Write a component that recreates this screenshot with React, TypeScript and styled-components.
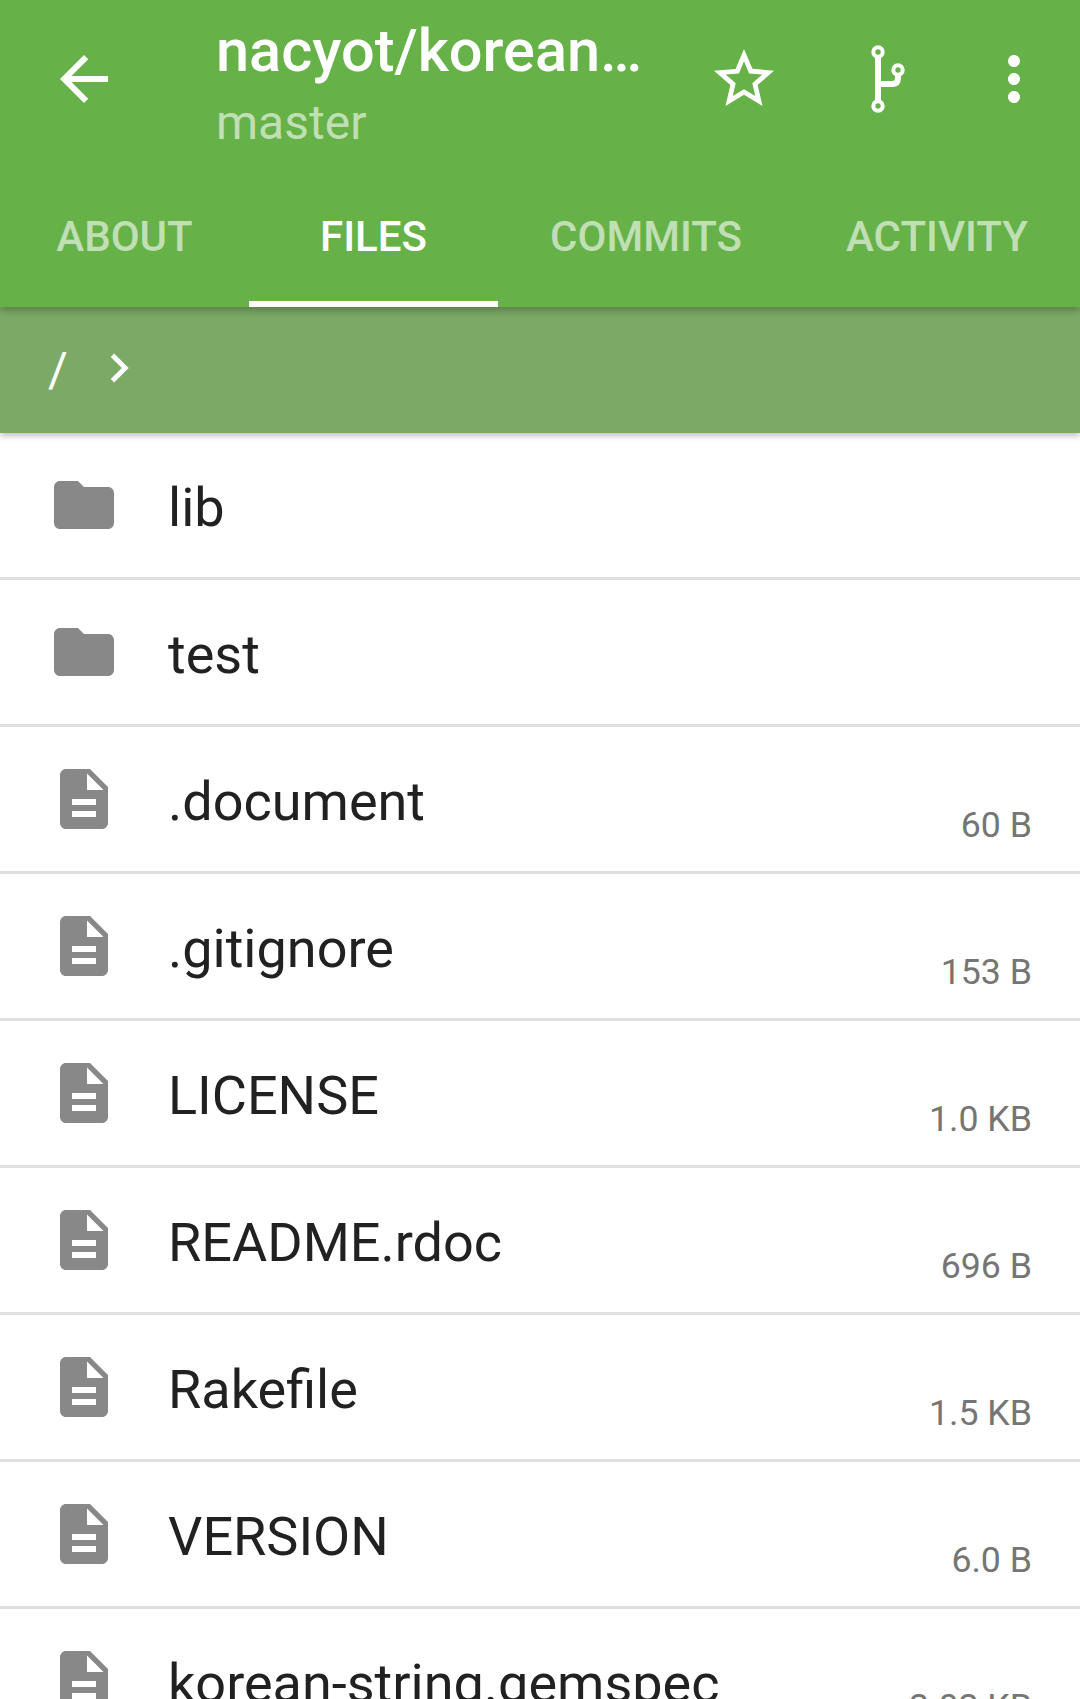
import styled, { createGlobalStyle } from "styled-components";

const GlobalStyle = createGlobalStyle`
    html, body {
        margin: 0;
        padding: 0;
        background: #fff;
    }
    body {
        font-family: Roboto, "Noto Sans", sans-serif;
    }
`

const Screen = styled.div`
    width: 1080px;
    height: 1699px;
    overflow: hidden;
    background: #fff;
`

const AppBar = styled.header`
    position: relative;
    z-index: 2;
    height: 307px;
    background: #66b248;
    box-shadow: 0 3px 9px rgba(0, 0, 0, 0.3);
`

const Toolbar = styled.div`
    display: flex;
    align-items: flex-start;
    height: 190px;
    padding-left: 48px;
`

const ActionIcon = styled.svg<{ $left?: number }>`
    flex: none;
    width: 72px;
    height: 72px;
    margin-top: 43px;
    margin-left: ${({ $left }) => $left ?? 0}px;
    fill: #fff;
`

const TitleBlock = styled.div`
    width: 492px;
    margin-left: 96px;
    padding-top: 16px;
`

const Title = styled.div`
    font-size: 59.5px;
    line-height: 70px;
    font-weight: 500;
    color: #fff;
    white-space: nowrap;
`

const Branch = styled.div`
    font-size: 48px;
    line-height: 56px;
    margin-top: 9px;
    color: rgba(255, 255, 255, 0.6);
`

const Tabs = styled.nav`
    display: grid;
    grid-template-columns: 249px 249px 296px 286px;
    height: 117px;
`

const Tab = styled.div<{ $active?: boolean }>`
    display: flex;
    align-items: flex-start;
    justify-content: center;
    padding-top: 22px;
    font-size: 42px;
    line-height: 50px;
    font-weight: 500;
    color: ${({ $active }) => ($active ? "#fff" : "rgba(255, 255, 255, 0.6)")};
    border-bottom: 6px solid ${({ $active }) => ($active ? "#fff" : "transparent")};
`

const PathBar = styled.div`
    position: relative;
    z-index: 1;
    display: flex;
    align-items: center;
    height: 126px;
    padding-left: 48px;
    background: #7caa66;
    box-shadow: 0 3px 6px rgba(0, 0, 0, 0.25);
`

const PathText = styled.span`
    font-size: 48px;
    line-height: 56px;
    color: #fff;
`

const PathChevron = styled.svg`
    width: 58px;
    height: 58px;
    margin-left: 22px;
    margin-top: -4px;
    fill: #fff;
`

const FileRow = styled.div`
    display: flex;
    align-items: flex-start;
    box-sizing: border-box;
    height: 147px;
    padding: 36px 48px 0 48px;
    border-bottom: 3px solid #e0e0e0;
`

const FileIcon = styled.svg`
    flex: none;
    width: 72px;
    height: 72px;
    fill: #888;
`

const FileName = styled.div`
    flex: 1;
    margin-left: 48px;
    padding-top: 3px;
    font-size: 54px;
    line-height: 72px;
    color: #212121;
    white-space: nowrap;
`

const FileSize = styled.div`
    margin-top: 38px;
    font-size: 35.7px;
    line-height: 48px;
    color: #757575;
    white-space: nowrap;
`

const FOLDER = "M10 4H4c-1.1 0-1.99.9-1.99 2L2 18c0 1.1.9 2 2 2h16c1.1 0 2-.9 2-2V8c0-1.1-.9-2-2-2h-8l-2-2z";
const DOCUMENT = "M14 2H6c-1.1 0-1.99.9-1.99 2L4 20c0 1.1.89 2 1.99 2H18c1.1 0 2-.9 2-2V8l-6-6zm2 16H8v-2h8v2zm0-4H8v-2h8v2zm-3-5V3.5L18.5 9H13z";

const files = [
    { name: "lib", folder: true },
    { name: "test", folder: true },
    { name: ".document", size: "60 B" },
    { name: ".gitignore", size: "153 B" },
    { name: "LICENSE", size: "1.0 KB" },
    { name: "README.rdoc", size: "696 B" },
    { name: "Rakefile", size: "1.5 KB" },
    { name: "VERSION", size: "6.0 B" },
    { name: "korean-string.gemspec", size: "2.02 KB" },
];

const App = () => {
    return <>
        <GlobalStyle />
        <Screen>
            <AppBar>
                <Toolbar>
                    <ActionIcon viewBox="0 0 24 24">
                        <path d="M20 11H7.83l5.59-5.59L12 4l-8 8 8 8 1.41-1.41L7.83 13H20v-2z" />
                    </ActionIcon>
                    <TitleBlock>
                        <Title>nacyot/korean…</Title>
                        <Branch>master</Branch>
                    </TitleBlock>
                    <ActionIcon viewBox="0 0 24 24">
                        <path d="M22 9.24l-7.19-.62L12 2 9.19 8.63 2 9.24l5.46 4.73L5.82 21 12 17.27 18.18 21l-1.63-7.03L22 9.24zM12 15.4l-3.76 2.27 1-4.28-3.32-2.88 4.38-.38L12 6.1l1.71 4.04 4.38.38-3.32 2.88 1 4.28L12 15.4z" />
                    </ActionIcon>
                    <ActionIcon $left={72} viewBox="0 0 72 72">
                        <g fill="none" stroke="#fff" strokeWidth="4">
                            <circle cx="26" cy="9" r="4.7" />
                            <circle cx="46" cy="27" r="4.7" />
                            <circle cx="26" cy="63" r="4.7" />
                            <path strokeWidth="6" d="M26 13v46M26 41h14c4 0 6-2 6-6v-4" />
                        </g>
                    </ActionIcon>
                    <ActionIcon $left={54} viewBox="0 0 24 24">
                        <path d="M12 8c1.1 0 2-.9 2-2s-.9-2-2-2-2 .9-2 2 .9 2 2 2zm0 2c-1.1 0-2 .9-2 2s.9 2 2 2 2-.9 2-2-.9-2-2-2zm0 6c-1.1 0-2 .9-2 2s.9 2 2 2 2-.9 2-2-.9-2-2-2z" />
                    </ActionIcon>
                </Toolbar>
                <Tabs>
                    <Tab>ABOUT</Tab>
                    <Tab $active>FILES</Tab>
                    <Tab>COMMITS</Tab>
                    <Tab>ACTIVITY</Tab>
                </Tabs>
            </AppBar>
            <PathBar>
                <PathText>/</PathText>
                <PathChevron viewBox="0 0 24 24">
                    <path d="M10 6L8.59 7.41 13.17 12l-4.58 4.59L10 18l6-6z" />
                </PathChevron>
            </PathBar>
            {files.map((file) => (
                <FileRow key={file.name}>
                    <FileIcon viewBox="0 0 24 24">
                        <path d={file.folder ? FOLDER : DOCUMENT} />
                    </FileIcon>
                    <FileName>{file.name}</FileName>
                    {file.size && <FileSize>{file.size}</FileSize>}
                </FileRow>
            ))}
        </Screen>
    </>
}

export default App;
